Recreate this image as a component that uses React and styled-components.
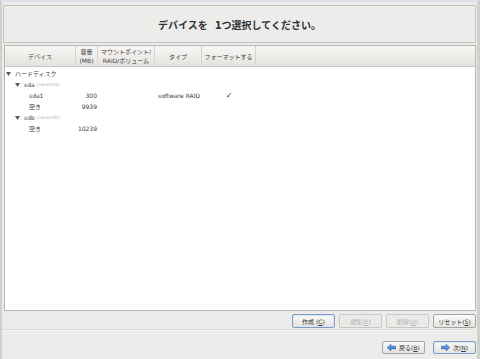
import React from 'react'
import styled, { createGlobalStyle } from 'styled-components'

const Global = createGlobalStyle`
  html, body { margin:0; padding:0; background:#edecea; }
  body { font-family:"DejaVu Sans","Noto Sans CJK JP",sans-serif; }
`

const COLS = '71px 22px 57px 47px 54px 1fr'

const rows = [
  { level: 0, name: 'ハードディスク', open: true },
  { level: 1, name: 'sda', path: '(/dev/sda)', open: true },
  { level: 2, name: 'sda1', size: '300', type: 'software RAID', format: true },
  { level: 2, name: '空き', size: '9939' },
  { level: 1, name: 'sdb', path: '(/dev/sdb)', open: true },
  { level: 2, name: '空き', size: '10239' },
]

const indent = [1, 10, 24]

function Expander() {
  return (
    <svg width="5" height="4" viewBox="0 0 5 4">
      <path d="M0 0 L5 0 L2.5 4 Z" fill="#5a5c5a" />
    </svg>
  )
}

function Arrow({ dir }) {
  const d = dir === 'left'
    ? 'M0 3.5 L4 0 L4 2 L9 2 L9 5 L4 5 L4 7 Z'
    : 'M9 3.5 L5 0 L5 2 L0 2 L0 5 L5 5 L5 7 Z'
  return (
    <svg width="9" height="7" viewBox="0 0 9 7">
      <defs>
        <linearGradient id={'g' + dir} x1="0" y1="0" x2="0" y2="1">
          <stop offset="0" stopColor="#7fb0ea" />
          <stop offset="1" stopColor="#2f6bc0" />
        </linearGradient>
      </defs>
      <path d={d} fill={'url(#g' + dir + ')'} stroke="#2a5ea8" strokeWidth="0.4" />
    </svg>
  )
}

function Label({ text, mn }) {
  return <span>{text}(<u>{mn}</u>)</span>
}

export default function App() {
  return (
    <>
      <Global />
      <Screen>
        <Header>デバイスを&nbsp;&nbsp;1つ選択してください。</Header>

        <Tree>
          <TreeHead>
            <HeadCell>デバイス</HeadCell>
            <HeadCell>容量<br />(MB)</HeadCell>
            <HeadCell>マウントポイント/<br />RAID/ボリューム</HeadCell>
            <HeadCell>タイプ</HeadCell>
            <HeadCell>フォーマットする</HeadCell>
            <HeadCell $last />
          </TreeHead>
          <TreeBody>
            {rows.map((r, i) => (
              <Row key={i}>
                <NameCell $pad={indent[r.level]}>
                  {r.open && <ExpWrap><Expander /></ExpWrap>}
                  <span>{r.name}</span>
                  {r.path && <DevPath>{r.path}</DevPath>}
                </NameCell>
                <SizeCell>{r.size}</SizeCell>
                <Cell />
                <TypeCell>{r.type}</TypeCell>
                <CheckCell>{r.format ? '✓' : ''}</CheckCell>
                <Cell />
              </Row>
            ))}
          </TreeBody>
        </Tree>

        <ButtonBar>
          <Button $default><span>作成 (<u>C</u>)</span></Button>
          <Button disabled><Label text="編集" mn="E" /></Button>
          <Button disabled><Label text="削除" mn="D" /></Button>
          <Button><Label text="リセット" mn="S" /></Button>
        </ButtonBar>

        <Separator />

        <NavBar>
          <NavButton><Arrow dir="left" /><Label text="戻る" mn="B" /></NavButton>
          <NavButton $default><Arrow dir="right" /><Label text="次" mn="N" /></NavButton>
        </NavBar>
      </Screen>
    </>
  )
}

const Screen = styled.div`
  width:480px;
  height:359px;
  box-sizing:border-box;
  background:#edecea;
  border-top:2px solid #dee2ea;
  border-left:2px solid #d2d0cd;
  border-right:3px solid #d2d0cd;
  padding:3px 1px 0 1px;
  display:flex;
  flex-direction:column;
  overflow:hidden;
`

const Header = styled.div`
  height:38px;
  box-sizing:border-box;
  border:1px solid #c5c3bf;
  display:flex;
  align-items:center;
  justify-content:center;
  font-size:10px;
  font-weight:bold;
  color:#2e3436;
  padding-top:1px;
`

const Tree = styled.div`
  margin:2px 0 0 1px;
  height:266px;
  box-sizing:border-box;
  border:1px solid #b8b6b2;
  background:#fff;
  display:flex;
  flex-direction:column;
`

const TreeHead = styled.div`
  display:grid;
  grid-template-columns:${COLS};
  height:21px;
  box-sizing:border-box;
  border-bottom:1px solid #c9c7c3;
  background:linear-gradient(#f8f7f5, #e5e3e0);
`

const HeadCell = styled.div`
  display:flex;
  align-items:center;
  justify-content:center;
  text-align:center;
  font-size:6px;
  line-height:9px;
  color:#3c3c3c;
  border-right:${p => p.$last ? 'none' : '1px solid #d6d4d0'};
  white-space:nowrap;
  overflow:hidden;
`

const TreeBody = styled.div`
  padding-top:1px;
`

const Row = styled.div`
  display:grid;
  grid-template-columns:${COLS};
  height:11px;
  align-items:center;
  font-size:6px;
  color:#3a3c3c;
`

const Cell = styled.div`
  white-space:nowrap;
`

const NameCell = styled(Cell)`
  display:flex;
  align-items:center;
  padding-left:${p => p.$pad}px;
  overflow:hidden;
`

const ExpWrap = styled.span`
  display:flex;
  flex:none;
  width:9px;
`

const DevPath = styled.span`
  margin-left:2px;
  font-size:4.5px;
  color:#b4b4b4;
`

const SizeCell = styled(Cell)`
  text-align:right;
  padding-right:1px;
`

const TypeCell = styled(Cell)`
  padding-left:3px;
  overflow:visible;
`

const CheckCell = styled(Cell)`
  text-align:center;
  font-size:8px;
  color:#333;
`

const ButtonBar = styled.div`
  margin-top:3px;
  display:flex;
  justify-content:flex-end;
  gap:4px;
`

const Button = styled.button`
  width:43px;
  height:14px;
  box-sizing:border-box;
  padding:0;
  margin:0;
  display:flex;
  align-items:center;
  justify-content:center;
  gap:3px;
  font-family:"DejaVu Sans","Noto Sans CJK JP",sans-serif;
  font-size:6px;
  color:${p => p.disabled ? '#b3b1ae' : '#2e3436'};
  border:1px solid ${p => p.$default ? '#7f9cc4' : p.disabled ? '#c9c7c4' : '#a6a4a0'};
  border-radius:2px;
  background:${p => p.disabled ? '#eceae8' : 'linear-gradient(#fbfaf9, #e6e4e1)'};
  box-shadow:${p => p.$default ? 'inset 0 0 0 1px #dbe5f3' : 'none'};
  u { text-decoration-thickness:0.5px; text-underline-offset:1px; }
`

const Separator = styled.div`
  margin-top:1px;
  height:2px;
  box-sizing:border-box;
  border-top:1px solid #dcdad7;
  border-bottom:1px solid #f7f6f5;
`

const NavBar = styled.div`
  margin-top:10px;
  display:flex;
  justify-content:flex-end;
  gap:8px;
`

const NavButton = styled(Button)`
  height:13px;
`
